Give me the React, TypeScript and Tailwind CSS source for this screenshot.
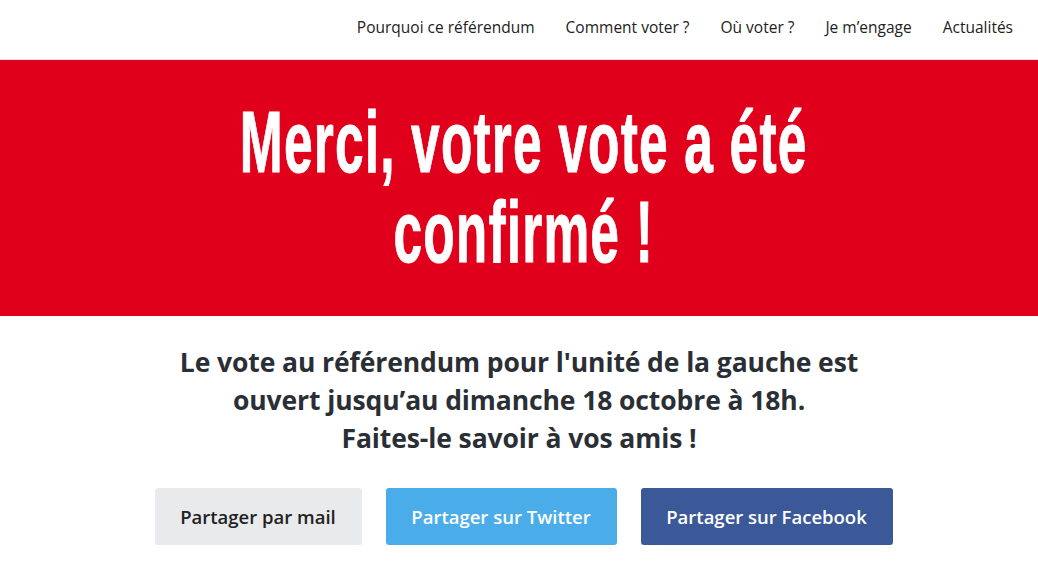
import React from "react";

export default function App() {
  const nav = ["Pourquoi ce référendum", "Comment voter ?", "Où voter ?", "Je m’engage", "Actualités"];
  return (
    <div className="w-[1038px] h-[576px] bg-white overflow-hidden [font-family:'Open_Sans',sans-serif]">
      <header className="h-[60px] flex items-center justify-end pr-[25px] border-b border-[#f3e3e5]">
        <nav className="flex gap-[31px] text-[15.5px] text-[#222] pb-[4px]">
          {nav.map((n) => (
            <a key={n} className="leading-none">{n}</a>
          ))}
        </nav>
      </header>
      <section className="h-[256px] bg-[#e1001b] flex flex-col items-center justify-center">
        <h1 className="w-full pl-[16px] text-center text-white font-bold text-[88px] leading-[90px] tracking-[2px] scale-x-[0.585] [font-family:'Liberation_Sans',sans-serif] [-webkit-text-stroke:1px_white] pb-[2px]">
          Merci, votre vote a été
          <br />
          confirmé !
        </h1>
      </section>
      <section className="pt-[27px] flex flex-col items-center">
        <p className="text-center font-bold text-[26.5px] leading-[38px] text-[#2a2f35] tracking-[-0.1px]">
          Le vote au référendum pour l'unité de la gauche est
          <br />
          ouvert jusqu’au dimanche 18 octobre à 18h.
          <br />
          Faites-le savoir à vos amis !
        </p>
        <div className="mt-[31px] ml-[9px] flex gap-[24px] text-[18.5px] font-semibold">
          <button className="w-[207px] h-[57px] rounded-[3px] bg-[#e9eaeb] text-[#222]">Partager par mail</button>
          <button className="w-[231px] h-[57px] rounded-[3px] bg-[#4aadea] text-white">Partager sur Twitter</button>
          <button className="w-[252px] h-[57px] rounded-[3px] bg-[#3b5998] text-white">Partager sur Facebook</button>
        </div>
      </section>
    </div>
  );
}
